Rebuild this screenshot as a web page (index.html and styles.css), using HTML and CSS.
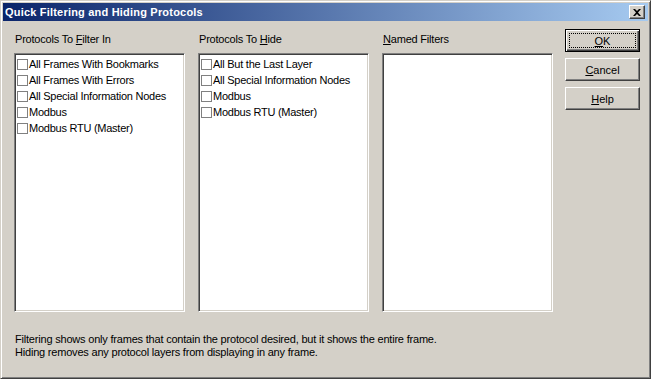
FILE: index.html
```html
<!DOCTYPE html>
<html lang="en">
<head>
  <meta charset="UTF-8" />
  <title>Quick Filtering and Hiding Protocols</title>
  <link rel="stylesheet" href="styles.css">
</head>
<body>

  <div class="window">
    <div class="titlebar">
      <span class="title">Quick Filtering and Hiding Protocols</span>
      <button class="close-btn" type="button" aria-label="Close">
        <svg width="8" height="7" viewBox="0 0 8 7">
          <path d="M0 0h2l2 2 2-2h2l-3 3.5 3 3.5h-2l-2-2-2 2h-2l3-3.5z" fill="#000"/>
        </svg>
      </button>
    </div>

    <div class="dialog">
      <div class="main">
        <div class="group">
          <div class="label">Protocols To <u>F</u>ilter In</div>
          <div class="listbox">
            <div class="item"><span class="check"></span>All Frames With Bookmarks</div>
            <div class="item"><span class="check"></span>All Frames With Errors</div>
            <div class="item"><span class="check"></span>All Special Information Nodes</div>
            <div class="item"><span class="check"></span>Modbus</div>
            <div class="item"><span class="check"></span>Modbus RTU (Master)</div>
          </div>
        </div>

        <div class="group">
          <div class="label">Protocols To <u>H</u>ide</div>
          <div class="listbox">
            <div class="item"><span class="check"></span>All But the Last Layer</div>
            <div class="item"><span class="check"></span>All Special Information Nodes</div>
            <div class="item"><span class="check"></span>Modbus</div>
            <div class="item"><span class="check"></span>Modbus RTU (Master)</div>
          </div>
        </div>

        <div class="group">
          <div class="label"><u>N</u>amed Filters</div>
          <div class="listbox"></div>
        </div>

        <div class="buttons">
          <button class="btn btn-default" type="button"><u>O</u>K</button>
          <button class="btn" type="button"><u>C</u>ancel</button>
          <button class="btn" type="button"><u>H</u>elp</button>
        </div>
      </div>

      <p class="note">
        Filtering shows only frames that contain the protocol desired, but it shows the entire frame.<br>
        Hiding removes any protocol layers from displaying in any frame.
      </p>
    </div>
  </div>

</body>
</html>
```

FILE: styles.css
```css
body {
  margin: 0;
  padding: 0;
  background: #d4d0c8;
  font-family: 'Liberation Sans', Arial, sans-serif;
  font-size: 11px;
  color: #000;
}
.window {
  box-sizing: border-box;
  width: 651px;
  height: 379px;
  padding: 2px;
  background: #d4d0c8;
  border: 1px solid;
  border-color: #d4d0c8 #404040 #404040 #d4d0c8;
  box-shadow: inset 1px 1px #fff, inset -1px -1px #808080;
}
.titlebar {
  height: 18px;
  display: flex;
  align-items: center;
  justify-content: space-between;
  padding: 0 3px 0 2px;
  background: linear-gradient(to right, #0a246a, #a6caf0);
}
.title {
  color: #fff;
  font-weight: bold;
  font-size: 11px;
  letter-spacing: 0.2px;
}
.close-btn {
  box-sizing: border-box;
  width: 16px;
  height: 14px;
  padding: 0;
  display: flex;
  align-items: center;
  justify-content: center;
  background: #d4d0c8;
  border: 1px solid;
  border-color: #fff #404040 #404040 #fff;
  box-shadow: inset -1px -1px #808080;
}
.dialog {
  padding: 12px 0 0 11px;
}
.main {
  display: flex;
}
.group {
  width: 171px;
  margin-right: 13px;
}
.label {
  height: 13px;
  line-height: 13px;
  padding-left: 1px;
  letter-spacing: -0.2px;
  margin-bottom: 7px;
}
.listbox {
  box-sizing: border-box;
  height: 259px;
  padding: 1px;
  background: #fff;
  border: 1px solid;
  border-color: #808080 #fff #fff #808080;
  box-shadow: inset 1px 1px #404040, inset -1px -1px #d4d0c8;
}
.listbox .item:first-child {
  margin-top: 1px;
}
.item {
  display: flex;
  align-items: center;
  height: 16px;
  letter-spacing: -0.25px;
  white-space: nowrap;
}
.check {
  box-sizing: border-box;
  width: 11px;
  height: 11px;
  margin: 0 1px 0 1px;
  border: 1px solid #808080;
  background: #fff;
}
.buttons {
  display: flex;
  flex-direction: column;
  gap: 6px;
  margin-top: -4px;
  margin-left: -1px;
}
.btn {
  box-sizing: border-box;
  position: relative;
  width: 75px;
  height: 23px;
  padding: 0;
  font-family: 'Liberation Sans', Arial, sans-serif;
  font-size: 11px;
  color: #000;
  background: #d4d0c8;
  border: 1px solid;
  border-color: #fff #404040 #404040 #fff;
  box-shadow: inset -1px -1px #808080, inset 1px 1px #d4d0c8;
}
.btn-default {
  border-color: #000;
  box-shadow: inset 1px 1px #fff, inset -1px -1px #404040, inset -2px -2px #808080;
}
.btn-default::after {
  content: "";
  position: absolute;
  top: 3px;
  left: 3px;
  right: 3px;
  bottom: 3px;
  border: 1px dotted #000;
}
.note {
  margin: 21px 0 0 1px;
  line-height: 13px;
  letter-spacing: -0.2px;
}
```
